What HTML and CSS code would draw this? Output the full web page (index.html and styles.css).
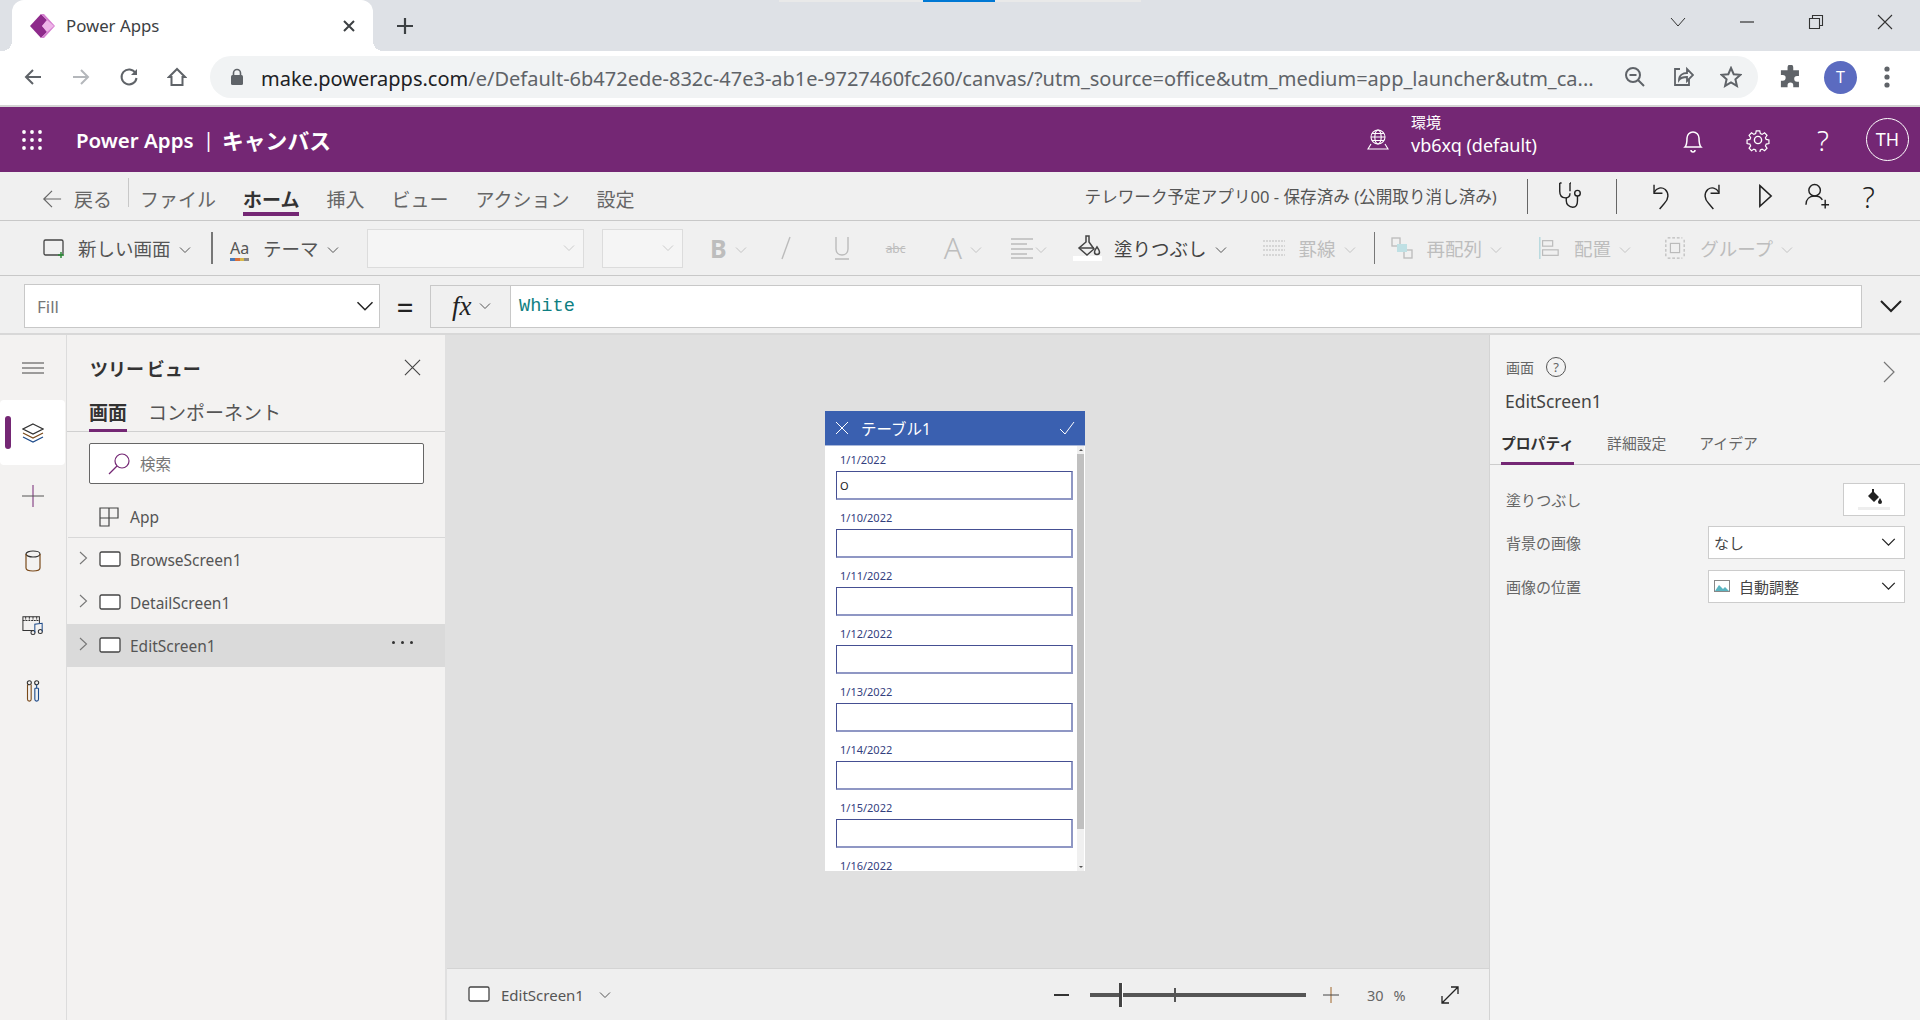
FILE: index.html
```html
<!DOCTYPE html>
<html lang="ja">
<head>
    <meta charset="UTF-8">
    <title>Power Apps</title>
    <link rel="stylesheet" href="styles.css">
</head>
<body>
    <svg class="defs" width="0" height="0">
        <symbol id="chev" viewBox="0 0 12 8"><path d="M1 1.5l5 5 5-5" fill="none" stroke="currentColor" stroke-width="1"/></symbol>
        <symbol id="screen" viewBox="0 0 22 16"><rect x="1" y="1" width="20" height="14" rx="1.5" fill="#fff" stroke="#444" stroke-width="1.3"/></symbol>
        <symbol id="right" viewBox="0 0 9 14"><path d="M1 1l6.5 6L1 13" fill="none" stroke="#777" stroke-width="1.1"/></symbol>
    </svg>

    <!-- Browser tab strip -->
    <div class="tabstrip">
        <div class="loading-line"><span></span></div>
        <div class="tab">
            <svg class="tab-logo" viewBox="0 0 25 24">
                <path d="M11 0L0 12l11 12 6-6V6z" fill="#8e2a8b"/>
                <path d="M11 0l6 6-5 6 5 6-6 6h3l11-12L14 0z" fill="#d67fd0"/>
                <path d="M12 12l5-6 7 6-7 6z" fill="#eeb4e8"/>
            </svg>
            <span class="tab-title">Power Apps</span>
            <svg class="tab-close" viewBox="0 0 14 14"><path d="M2 2l10 10M12 2L2 12" stroke="#3c4043" stroke-width="2"/></svg>
        </div>
        <svg class="tab-new" viewBox="0 0 18 18"><path d="M9 1v16M1 9h16" stroke="#3c4043" stroke-width="2.2"/></svg>
        <div class="win-controls">
            <svg viewBox="0 0 16 10"><path d="M1 1l7 8 7-8" fill="none" stroke="#333" stroke-width="1"/></svg>
            <svg viewBox="0 0 16 10"><path d="M1 5h14" stroke="#333" stroke-width="1.2"/></svg>
            <svg viewBox="0 0 16 16"><path d="M1.5 4.5h10v10h-10zM4.5 4.5v-3h10v10h-3" fill="none" stroke="#333" stroke-width="1.1"/></svg>
            <svg viewBox="0 0 16 16"><path d="M1 1l14 14M15 1L1 15" stroke="#333" stroke-width="1.1"/></svg>
        </div>
    </div>

    <!-- Browser address bar -->
    <div class="addressbar">
        <svg class="nav-icon nav-back" viewBox="0 0 20 20"><path d="M18 10H3M10 3l-7 7 7 7" fill="none" stroke="#5f6368" stroke-width="2"/></svg>
        <svg class="nav-icon nav-fwd" viewBox="0 0 20 20"><path d="M2 10h15M10 3l7 7-7 7" fill="none" stroke="#b4b7bb" stroke-width="2"/></svg>
        <svg class="nav-icon nav-reload" viewBox="0 0 20 20"><path d="M16.5 6A7.5 7.5 0 1 0 17.5 11" fill="none" stroke="#5f6368" stroke-width="2"/><path d="M18 2v6h-6z" fill="#5f6368"/></svg>
        <svg class="nav-icon nav-home" viewBox="0 0 20 20"><path d="M10 2L2 10h2.500v8h11v-8H18z" fill="none" stroke="#5f6368" stroke-width="2"/></svg>
        <div class="urlbar">
            <svg class="lock" viewBox="0 0 14 18"><path d="M3.500 8V5a3.500 3.500 0 0 1 7 0v3" fill="none" stroke="#5f6368" stroke-width="1.600"/><rect x="1" y="7" width="12" height="10" rx="1.500" fill="#5f6368"/></svg>
            <span class="url"><b>make.powerapps.com</b>/e/Default-6b472ede-832c-47e3-ab1e-9727460fc260/canvas/?utm_source=office&amp;utm_medium=app_launcher&amp;utm_ca...</span>
            <svg class="url-icon" viewBox="0 0 22 22"><circle cx="9" cy="9" r="7" fill="none" stroke="#5f6368" stroke-width="2"/><path d="M5.500 9h7M14 14l6 6" stroke="#5f6368" stroke-width="2"/></svg>
            <svg class="url-icon" viewBox="0 0 22 22"><path d="M8 3H3v16h14v-6" fill="none" stroke="#5f6368" stroke-width="1.800"/><path d="M7 14c0-5 4-7 8-7V3l6 6-6 6v-4c-3 0-6 0-8 3z" fill="none" stroke="#5f6368" stroke-width="1.800"/></svg>
            <svg class="url-icon" viewBox="0 0 22 22"><path d="M11 2l2.700 6.200 6.700.6-5 4.500 1.500 6.600L11 16.400l-5.900 3.500 1.500-6.600-5-4.500 6.700-.6z" fill="none" stroke="#5f6368" stroke-width="2"/></svg>
        </div>
        <svg class="ext-icon" viewBox="0 0 24 24"><path d="M9 2a3 3 0 0 1 6 0v3h6v6h-2a3 3 0 0 0 0 6h2v6h-6v-2a3 3 0 0 0-6 0v2H2v-7h2a3 3 0 0 0 0-6H2V5h7z" fill="#5f6368" transform="translate(0 .5) scale(.95)"/></svg>
        <div class="avatar">T</div>
        <svg class="menu-dots" viewBox="0 0 6 24"><circle cx="3" cy="4" r="2.600" fill="#5f6368"/><circle cx="3" cy="12" r="2.600" fill="#5f6368"/><circle cx="3" cy="20" r="2.600" fill="#5f6368"/></svg>
    </div>

    <!-- Power Apps header -->
    <header class="appbar">
        <svg class="waffle" viewBox="0 0 22 22" fill="#fff">
            <circle cx="3" cy="3" r="1.900"/><circle cx="11" cy="3" r="1.900"/><circle cx="19" cy="3" r="1.900"/>
            <circle cx="3" cy="11" r="1.900"/><circle cx="11" cy="11" r="1.900"/><circle cx="19" cy="11" r="1.900"/>
            <circle cx="3" cy="19" r="1.900"/><circle cx="11" cy="19" r="1.900"/><circle cx="19" cy="19" r="1.900"/>
        </svg>
        <span class="brand">Power Apps</span>
        <span class="brand-sep">|</span>
        <span class="brand-sub">キャンバス</span>
        <svg class="globe" viewBox="0 0 22 22" fill="none" stroke="#fff" stroke-width="1.100"><circle cx="11" cy="8" r="7"/><ellipse cx="11" cy="8" rx="3.200" ry="7"/><path d="M4 8h14M5 4.500h12M5 11.500h12M4 15l-3 5h20l-3-5"/></svg>
        <div class="env">
            <span class="env-label">環境</span>
            <span class="env-name">vb6xq (default)</span>
        </div>
        <svg class="bar-icon bell" viewBox="0 0 22 26" fill="none" stroke="#fff" stroke-width="1.500"><path d="M3 20c2-2 2-5 2-9a6 6 0 0 1 12 0c0 4 0 7 2 9zM9 23a2 2 0 0 0 4 0"/></svg>
        <svg class="bar-icon gear" viewBox="0 0 24 24" fill="none" stroke="#fff" stroke-width="1.400"><circle cx="12" cy="12" r="3.600"/><path d="M10 1.500h4l.7 3.200 2 .9 2.800-1.800 2.800 2.800-1.800 2.800.9 2 3.100.6v4l-3.100.7-.9 2 1.800 2.700-2.800 2.800-2.800-1.800-2 .9-.7 3.100h-4l-.7-3.100-2-.9-2.700 1.800-2.800-2.800 1.800-2.700-.9-2-3.200-.7v-4l3.200-.6.900-2-1.800-2.800 2.800-2.800 2.700 1.800 2-.9z" transform="translate(1.500 1.500) scale(.875)"/></svg>
        <span class="bar-help">?</span>
        <div class="user">TH</div>
    </header>

    <!-- Command tabs -->
    <div class="cmdbar">
        <svg class="back-arrow" viewBox="0 0 22 22"><path d="M21 11H2M11 2l-9 9 9 9" fill="none" stroke="#666" stroke-width="1.300"/></svg>
        <span class="cmd-back">戻る</span>
        <div class="cmd-sep"></div>
        <nav class="cmd-tabs">
            <span>ファイル</span>
            <span class="active">ホーム</span>
            <span>挿入</span>
            <span>ビュー</span>
            <span>アクション</span>
            <span>設定</span>
        </nav>
        <span class="app-status">テレワーク予定アプリ00 - 保存済み (公開取り消し済み)</span>
        <div class="tool-sep sep-a"></div>
        <svg class="tool tool-steth" viewBox="0 0 26 30" fill="none" stroke="#222" stroke-width="1.500"><path d="M2 1v9c0 5 3 7 6 7s5-2 5-5M2 1h2M14 1h-1"/><path d="M13 1v9"/><path d="M9 17v3c0 4 3 7 7 7s5-3 5-7v-5"/><circle cx="21" cy="12" r="3"/></svg>
        <div class="tool-sep sep-b"></div>
        <svg class="tool tool-undo" viewBox="0 0 20 30" fill="none" stroke="#222" stroke-width="1.500"><path d="M2 3v9h9"/><path d="M2 11c3-5 8-6 12-3 4 4 4 10-1 15l-5 6"/></svg>
        <svg class="tool tool-redo" viewBox="0 0 20 30" fill="none" stroke="#222" stroke-width="1.500"><path d="M18 3v9H9"/><path d="M18 11c-3-5-8-6-12-3-4 4-4 10 1 15l5 6"/></svg>
        <svg class="tool tool-play" viewBox="0 0 16 26" fill="none" stroke="#222" stroke-width="1.700"><path d="M2 2l12 11L2 24z"/></svg>
        <svg class="tool tool-user" viewBox="0 0 26 28" fill="none" stroke="#222" stroke-width="1.500"><circle cx="10" cy="8" r="6"/><path d="M1 23c0-6 4-9 9-9s7 2 8 4M21 18v9M17 23h8"/></svg>
        <span class="tool-help">?</span>
    </div>

    <!-- Ribbon -->
    <div class="ribbon">
        <div class="rb rb-new">
            <svg class="rb-icon-new" viewBox="0 0 24 20"><rect x="1" y="2" width="19" height="15" rx="1.500" fill="none" stroke="#444" stroke-width="1.300"/><path d="M18 14v6M15 17h6" stroke="#2e8b3a" stroke-width="1.500"/></svg>
            <span>新しい画面</span><svg class="chev"><use href="#chev"/></svg>
        </div>
        <div class="rb-sep"></div>
        <div class="rb rb-theme">
            <span class="aa">Aa<i class="aa-swatch"></i></span>
            <span>テーマ</span><svg class="chev"><use href="#chev"/></svg>
        </div>
        <div class="rb-select rb-font"><svg class="chev"><use href="#chev"/></svg></div>
        <div class="rb-select rb-size"><svg class="chev"><use href="#chev"/></svg></div>
        <div class="rb off rb-bold"><span class="fmt-b">B</span><svg class="chev"><use href="#chev"/></svg></div>
        <div class="rb off rb-italic"><svg viewBox="0 0 12 24" class="fmt-i"><path d="M10 1L2 23" stroke="#bbb" stroke-width="1.400"/></svg></div>
        <div class="rb off rb-under"><svg viewBox="0 0 16 24" class="fmt-u"><path d="M2 1v12c0 8 12 8 12 0V1M1 23h14" fill="none" stroke="#bbb" stroke-width="1.400"/></svg></div>
        <div class="rb off rb-strike"><span class="fmt-s">abc</span></div>
        <div class="rb off rb-color"><span class="fmt-a">A</span><svg class="chev"><use href="#chev"/></svg></div>
        <div class="rb off rb-align">
            <svg viewBox="0 0 22 22" class="fmt-al"><path d="M0 2h22M0 7h16M0 12h22M0 17h16M0 21h22" stroke="#bbb" stroke-width="1.400"/></svg>
            <svg class="chev"><use href="#chev"/></svg>
        </div>
        <div class="rb rb-fill">
            <svg class="fill-icon" viewBox="0 0 29 26"><path d="M13 1h3v6l5 7-7 6-8-7 7-6z" fill="none" stroke="#444" stroke-width="1.500"/><path d="M6 13h15" stroke="#444" stroke-width="1.500"/><path d="M24 12c1.500 2.500 2.500 3.500 2.500 5a2.500 2.500 0 0 1-5 0c0-1.500 1-2.500 2.500-5z" fill="none" stroke="#444" stroke-width="1.500"/><rect y="21" width="29" height="5" fill="#fff"/></svg>
            <span>塗りつぶし</span><svg class="chev"><use href="#chev"/></svg>
        </div>
        <div class="rb off rb-border">
            <svg class="off-icon" viewBox="0 0 22 16"><path d="M0 1h22M0 6h22M0 10h22M0 15h22" stroke="#bbb" stroke-width="1.200" stroke-dasharray="2 1"/></svg>
            <span>罫線</span><svg class="chev"><use href="#chev"/></svg>
        </div>
        <div class="rb-sep rb-sep2"></div>
        <div class="rb off rb-order">
            <svg class="off-icon" viewBox="0 0 22 22" fill="none" stroke="#bbb" stroke-width="1.300"><rect x="1" y="1" width="8" height="8"/><rect x="13" y="13" width="8" height="8"/><rect x="6" y="7" width="10" height="8" fill="#bfe0e4" stroke="none"/></svg>
            <span>再配列</span><svg class="chev"><use href="#chev"/></svg>
        </div>
        <div class="rb off rb-pos">
            <svg class="off-icon" viewBox="0 0 22 24" fill="none" stroke="#bbb" stroke-width="1.300"><path d="M1 0v24" stroke="#a9d3d9"/><rect x="4" y="4" width="11" height="6"/><rect x="4" y="14" width="17" height="6"/></svg>
            <span>配置</span><svg class="chev"><use href="#chev"/></svg>
        </div>
        <div class="rb off rb-group">
            <svg class="off-icon" viewBox="0 0 22 24" fill="none" stroke="#bbb" stroke-width="1.300"><path d="M1 3v18M21 3v18M3 1h16M3 23h16" stroke-dasharray="3 2"/><rect x="6" y="7" width="10" height="10"/></svg>
            <span>グループ</span><svg class="chev"><use href="#chev"/></svg>
        </div>
    </div>

    <!-- Formula bar -->
    <div class="formula">
        <div class="prop-select"><span>Fill</span><svg class="chev chev-lg"><use href="#chev"/></svg></div>
        <span class="equals">=</span>
        <div class="fx"><span class="fx-text">fx</span><svg class="chev"><use href="#chev"/></svg></div>
        <div class="formula-input">White</div>
        <svg class="formula-expand"><use href="#chev"/></svg>
    </div>

    <main class="workspace">
        <!-- Left rail -->
        <aside class="rail">
            <svg class="rail-burger" viewBox="0 0 22 12"><path d="M0 1h22M0 6h22M0 11h22" stroke="#444" stroke-width="1"/></svg>
            <div class="rail-active">
                <svg viewBox="0 0 22 20" fill="none" stroke="#333" stroke-width="1.200"><path d="M11 1l10 5-10 5L1 6z"/><path d="M1 10l10 5 10-5" stroke="#7a4a1a"/><path d="M1 14l10 5 10-5" stroke="#1c4a8a"/></svg>
            </div>
            <svg class="rail-icon" viewBox="0 0 22 22"><path d="M11 0v22" stroke="#742774" stroke-width="1"/><path d="M0 11h22" stroke="#555" stroke-width="1"/></svg>
            <svg class="rail-icon" viewBox="0 0 22 22" fill="none" stroke="#333" stroke-width="1.200"><ellipse cx="11" cy="4" rx="7" ry="3"/><path d="M4 4v14c0 4 14 4 14 0V4" stroke="#7a4a1a"/></svg>
            <svg class="rail-icon" viewBox="0 0 24 22" fill="none" stroke="#333" stroke-width="1.100"><path d="M13 16H1V1h18v7"/><path d="M1 5h18M4 1v4M8 1v4M12 1v4M16 1v4" stroke-dasharray="2 1"/><circle cx="12" cy="18" r="2.200"/><circle cx="20" cy="17" r="2.200"/><path d="M14 18V9l8 -1v9" stroke="#1c4a8a"/></svg>
            <svg class="rail-icon" viewBox="0 0 22 24" fill="none" stroke="#333" stroke-width="1.200"><circle cx="7" cy="3" r="2.200"/><path d="M5 5v16a2 2 0 0 0 4 0V5" stroke="#7a4a1a"/><circle cx="15" cy="3" r="2.200"/><path d="M13 9h4M13 9v12a2 2 0 0 0 4 0V9M15 5v4" stroke="#1c4a8a"/></svg>
        </aside>

        <!-- Tree view -->
        <section class="tree">
            <div class="tree-head">
                <h2>ツリー ビュー</h2>
                <svg class="tree-close" viewBox="0 0 18 18"><path d="M1 1l16 16M17 1L1 17" stroke="#444" stroke-width="1.200"/></svg>
            </div>
            <div class="tree-tabs">
                <span class="active">画面</span>
                <span>コンポーネント</span>
            </div>
            <div class="tree-search">
                <svg viewBox="0 0 22 22" fill="none" stroke="#742774" stroke-width="1.200"><circle cx="14" cy="8" r="7"/><path d="M9 13L1 21"/></svg>
                <span>検索</span>
            </div>
            <div class="tree-app">
                <svg viewBox="0 0 20 20" fill="none" stroke="#444" stroke-width="1.200"><path d="M1 1h18v10H1zM1 11v8h9v-18"/></svg>
                <span>App</span>
            </div>
            <div class="tree-row">
                <svg class="row-chev"><use href="#right"/></svg>
                <svg class="row-screen"><use href="#screen"/></svg>
                <span>BrowseScreen1</span>
            </div>
            <div class="tree-row">
                <svg class="row-chev"><use href="#right"/></svg>
                <svg class="row-screen"><use href="#screen"/></svg>
                <span>DetailScreen1</span>
            </div>
            <div class="tree-row selected">
                <svg class="row-chev"><use href="#right"/></svg>
                <svg class="row-screen"><use href="#screen"/></svg>
                <span>EditScreen1</span>
                <span class="row-more"><i></i><i></i><i></i></span>
            </div>
        </section>

        <!-- Canvas -->
        <section class="canvas">
            <div class="stage">
                <div class="phone">
                    <div class="phone-head">
                        <svg viewBox="0 0 14 14"><path d="M1 1l12 12M13 1L1 13" stroke="#fff" stroke-width="1"/></svg>
                        <span class="phone-title">テーブル1</span>
                        <svg class="phone-check" viewBox="0 0 16 14"><path d="M1 8l5 5L15 1" fill="none" stroke="#fff" stroke-width="1"/></svg>
                    </div>
                    <div class="phone-body">
                        <div class="entry"><label>1/1/2022</label><div class="entry-input">O</div></div>
                        <div class="entry"><label>1/10/2022</label><div class="entry-input"></div></div>
                        <div class="entry"><label>1/11/2022</label><div class="entry-input"></div></div>
                        <div class="entry"><label>1/12/2022</label><div class="entry-input"></div></div>
                        <div class="entry"><label>1/13/2022</label><div class="entry-input"></div></div>
                        <div class="entry"><label>1/14/2022</label><div class="entry-input"></div></div>
                        <div class="entry"><label>1/15/2022</label><div class="entry-input"></div></div>
                        <div class="entry"><label>1/16/2022</label><div class="entry-input"></div></div>
                        <div class="scroll"><i class="scroll-up"></i><i class="scroll-thumb"></i><i class="scroll-down"></i></div>
                    </div>
                </div>
            </div>
            <div class="statusbar">
                <svg class="row-screen"><use href="#screen"/></svg>
                <span class="status-name">EditScreen1</span>
                <svg class="chev status-chev"><use href="#chev"/></svg>
                <span class="zoom-minus"></span>
                <div class="slider"><i class="slider-thumb"></i><i class="slider-tick"></i></div>
                <svg class="zoom-plus" viewBox="0 0 16 16"><path d="M8 0v16" stroke="#a0662a" stroke-width="1"/><path d="M0 8h16" stroke="#444" stroke-width="1"/></svg>
                <span class="zoom-val">30</span>
                <span class="zoom-pct">%</span>
                <svg class="zoom-fit" viewBox="0 0 20 20" fill="none" stroke="#222" stroke-width="1.300"><path d="M2 18L18 2M11 2h7v7M2 11v7h7"/></svg>
            </div>
        </section>

        <!-- Properties -->
        <aside class="props">
            <div class="props-kind">
                <span>画面</span>
                <span class="props-help">?</span>
                <svg class="props-next" viewBox="0 0 12 22"><path d="M1 1l10 10L1 21" fill="none" stroke="#777" stroke-width="1.200"/></svg>
            </div>
            <div class="props-name">EditScreen1</div>
            <div class="props-tabs">
                <span class="active">プロパティ</span>
                <span>詳細設定</span>
                <span>アイデア</span>
            </div>
            <div class="prop-row">
                <span>塗りつぶし</span>
                <div class="fill-btn">
                    <svg viewBox="0 0 16 16"><path d="M6 0h2v3l5 5-5 5-6-6 4-4z" fill="#222"/><path d="M14 9c1 2 2 3 2 4a2 2 0 0 1-4 0c0-1 1-2 2-4z" fill="#222"/></svg>
                    <i></i>
                </div>
            </div>
            <div class="prop-row">
                <span>背景の画像</span>
                <div class="prop-dd"><span>なし</span><svg class="chev chev-lg"><use href="#chev"/></svg></div>
            </div>
            <div class="prop-row">
                <span>画像の位置</span>
                <div class="prop-dd">
                    <svg class="img-icon" viewBox="0 0 16 12"><rect x=".5" y=".5" width="15" height="11" fill="#fff" stroke="#888"/><path d="M1 11l4-6 4 4 2-2 4 4z" fill="#5ab4c0"/></svg>
                    <span class="dd-auto">自動調整</span>
                    <svg class="chev chev-lg"><use href="#chev"/></svg>
                </div>
            </div>
        </aside>
    </main>
</body>
</html>
```

FILE: styles.css
```css
/* Page */
* {
    box-sizing: border-box;
}

body {
    margin: 0;
    width: 1920px;
    height: 1020px;
    overflow: hidden;
    font-family: "Noto Sans", "Noto Sans CJK JP", sans-serif;
    color: #333;
    background-color: #f0f0f0;
}

.defs {
    position: absolute;
}

svg {
    display: block;
    flex: none;
}

.chev {
    width: 12px;
    height: 8px;
    color: #555;
}

.chev-lg {
    width: 18px;
    height: 12px;
    color: #222;
}

/* Browser tab strip */
.tabstrip {
    position: relative;
    display: flex;
    align-items: flex-end;
    height: 51px;
    padding-left: 12px;
    background-color: #dee1e6;
}

.loading-line {
    position: absolute;
    top: 0;
    left: 779px;
    width: 362px;
    height: 2px;
    background-color: #e9e9e9;
}

.loading-line span {
    display: block;
    width: 72px;
    height: 2px;
    margin-left: 144px;
    background-color: #0078d4;
}

.tab {
    position: relative;
    display: flex;
    align-items: center;
    width: 361px;
    height: 51px;
    padding: 0 18px;
    background-color: #fff;
    border-radius: 12px 12px 0 0;
}

.tab::before,
.tab::after {
    content: "";
    position: absolute;
    bottom: 0;
    width: 10px;
    height: 10px;
}

.tab::before {
    left: -10px;
    background: radial-gradient(circle at 0 0, transparent 10px, #fff 10px);
}

.tab::after {
    right: -10px;
    background: radial-gradient(circle at 100% 0, transparent 10px, #fff 10px);
}

.tab-logo {
    width: 25px;
    height: 24px;
}

.tab-title {
    margin-left: 11px;
    font-size: 16.800px;
    color: #3c4043;
}

.tab-close {
    width: 14px;
    height: 14px;
    margin-left: auto;
    margin-right: -1px;
}

.tab-new {
    width: 18px;
    height: 18px;
    margin: 0 0 16px 23px;
}

.win-controls {
    display: flex;
    align-items: center;
    height: 44px;
    margin-left: auto;
    align-self: flex-start;
}

.win-controls svg {
    width: 16px;
    height: 16px;
    margin-right: 53px;
}

.win-controls svg:last-child {
    margin-right: 27px;
}

/* Browser address bar */
.addressbar {
    display: flex;
    align-items: center;
    height: 56px;
    padding-bottom: 2px;
    background-color: #fff;
    border-bottom: 2px solid #d4d4d4;
}

.nav-icon {
    width: 20px;
    height: 20px;
    margin-left: 28px;
}

.nav-back {
    margin-left: 23px;
}

.urlbar {
    display: flex;
    align-items: center;
    width: 1548px;
    height: 42px;
    margin-left: 23px;
    padding: 0 16px 0 20px;
    background-color: #f1f3f4;
    border-radius: 21px;
}

.lock {
    width: 14px;
    height: 18px;
}

.url {
    flex: 1;
    margin-left: 17px;
    padding-top: 2px;
    font-size: 20px;
    white-space: nowrap;
    overflow: hidden;
    color: #5f6368;
}

.url b {
    font-weight: 400;
    color: #202124;
}

.url-icon {
    width: 22px;
    height: 22px;
    margin-left: 26px;
}

.ext-icon {
    width: 24px;
    height: 24px;
    margin-left: 21px;
}

.avatar {
    width: 33px;
    height: 33px;
    margin-left: 21px;
    border-radius: 50%;
    background-color: #5b6bc0;
    color: #fff;
    font-size: 16px;
    line-height: 33px;
    text-align: center;
}

.menu-dots {
    width: 6px;
    height: 24px;
    margin-left: 27px;
}

/* Power Apps header */
.appbar {
    display: flex;
    align-items: center;
    height: 65px;
    padding-left: 21px;
    background-color: #742774;
    color: #fff;
    white-space: nowrap;
}

.waffle {
    width: 22px;
    height: 22px;
}

.brand {
    flex: none;
    width: 116px;
    margin-left: 33px;
    font-size: 20.500px;
    font-weight: 600;
}

.brand-sep {
    flex: none;
    width: 6px;
    margin-left: 11px;
    font-size: 20px;
}

.brand-sub {
    flex: none;
    width: 108px;
    margin-left: 13px;
    font-size: 21.800px;
    font-weight: 700;
}

.globe {
    width: 22px;
    height: 22px;
    margin-left: 1037px;
}

.env {
    display: flex;
    flex: none;
    flex-direction: column;
    width: 125px;
    margin-left: 22px;
    margin-top: -8px;
}

.env-label {
    font-size: 15px;
    line-height: 19px;
}

.env-name {
    font-size: 18px;
    line-height: 26px;
}

.bar-icon {
    width: 22px;
    height: 26px;
}

.bell {
    margin-left: 146px;
}

.gear {
    width: 24px;
    height: 24px;
    margin-left: 42px;
}

.bar-help {
    margin-left: 45px;
    width: 16px;
    font-size: 28px;
    font-weight: 300;
    text-align: center;
}

.user {
    flex: none;
    width: 43px;
    height: 43px;
    margin-left: 35px;
    border: 1px solid #fff;
    border-radius: 50%;
    font-size: 18px;
    line-height: 41px;
    text-align: center;
}

/* Command tabs */
.cmdbar {
    display: flex;
    align-items: center;
    height: 49px;
    padding-left: 42px;
    border-bottom: 1px solid #c8c8c8;
    font-size: 19px;
    color: #666;
}

.cmdbar > span,
.cmd-tabs {
    padding-top: 6px;
}

.back-arrow {
    width: 20px;
    height: 20px;
    margin-top: 6px;
}

.cmd-back {
    margin-left: 12px;
    width: 38px;
    white-space: nowrap;
}

.cmd-sep {
    width: 1px;
    height: 29px;
    margin-left: 16px;
    margin-bottom: 8px;
    background-color: #c8c8c8;
}

.cmd-tabs {
    display: flex;
    gap: 27px;
    margin-left: 11px;
}

.cmd-tabs span {
    position: relative;
    white-space: nowrap;
}

.cmd-tabs .active {
    font-weight: 700;
    color: #333;
}

.cmd-tabs .active::after {
    content: "";
    position: absolute;
    left: 0;
    right: 0;
    bottom: -3px;
    height: 4px;
    background-color: #742774;
}

.cmdbar .app-status {
    flex: none;
    width: 414px;
    margin-left: 450px;
    padding-top: 0;
    font-size: 16.600px;
    white-space: nowrap;
    color: #555;
}

.tool-sep {
    flex: none;
    width: 1px;
    height: 35px;
    background-color: #666;
}

.sep-a {
    margin-left: 28px;
}

.sep-b {
    margin-left: 33px;
}

.tool {
    height: 28px;
}

.tool-steth {
    width: 26px;
    margin-left: 29px;
}

.tool-undo {
    width: 19px;
    margin-left: 35px;
}

.tool-redo {
    width: 19px;
    margin-left: 31px;
}

.tool-play {
    width: 15px;
    margin-left: 37px;
}

.tool-user {
    width: 25px;
    margin-left: 32px;
}

.cmdbar .tool-help {
    width: 18px;
    margin-left: 30px;
    padding-top: 0;
    font-size: 29px;
    font-weight: 300;
    color: #222;
    text-align: center;
}

/* Ribbon */
.ribbon {
    display: flex;
    align-items: center;
    height: 55px;
    padding-left: 43px;
    border-bottom: 1px solid #c8c8c8;
    font-size: 18.500px;
    color: #555;
}

.rb {
    display: flex;
    flex: none;
    align-items: center;
    white-space: nowrap;
}

.rb .chev {
    margin: 3px 0 0 8px;
}

.rb.off {
    color: #bdbdbd;
}

.rb.off .chev {
    color: #c4c4c4;
}

.rb-sep {
    flex: none;
    width: 2px;
    height: 32px;
    background-color: #777;
}

.rb-sep2 {
    width: 1px;
    margin-left: 18px;
}

.rb-new {
    width: 168px;
}

.rb-icon-new {
    width: 24px;
    height: 20px;
    margin-right: 11px;
}

.rb-theme {
    width: 130px;
    margin-left: 17px;
}

.aa {
    position: relative;
    width: 20px;
    margin-right: 13px;
    font-size: 16px;
    line-height: 20px;
}

.aa-swatch {
    position: absolute;
    left: 0;
    bottom: -3px;
    width: 19px;
    height: 3px;
    background: linear-gradient(90deg, #4a7ab8 25%, #d9703a 25% 50%, #d8b84a 50% 75%, #8a8a8a 75%);
}

.rb-select {
    display: flex;
    flex: none;
    align-items: center;
    justify-content: flex-end;
    height: 39px;
    padding-right: 8px;
    background-color: #f5f5f5;
    border: 1px solid #dcdcdc;
}

.rb-select .chev {
    color: #ccc;
}

.rb-font {
    width: 217px;
    margin-left: 7px;
}

.rb-size {
    width: 81px;
    margin-left: 18px;
}

.rb-bold {
    margin-left: 27px;
}

.fmt-b {
    font-size: 25px;
    font-weight: 700;
    line-height: 30px;
}

.rb-italic {
    margin-left: 33px;
}

.fmt-i {
    width: 12px;
    height: 24px;
}

.rb-under {
    margin-left: 42px;
}

.fmt-u {
    width: 16px;
    height: 24px;
}

.rb-strike {
    margin-left: 36px;
}

.fmt-s {
    width: 22px;
    font-size: 12px;
    text-decoration: line-through;
}

.rb-color {
    margin-left: 36px;
}

.fmt-a {
    font-size: 30px;
    font-weight: 300;
    line-height: 32px;
}

.rb-align {
    margin-left: 29px;
}

.fmt-al {
    width: 22px;
    height: 22px;
}

.rb-align .chev {
    margin-left: 2px;
}

.rb-fill {
    margin-left: 26px;
    color: #444;
}

.fill-icon {
    width: 29px;
    height: 26px;
    margin-right: 12px;
}

.rb-border {
    margin-left: 36px;
}

.off-icon {
    width: 22px;
    height: 22px;
    margin-right: 14px;
}

.rb-order {
    margin-left: 16px;
}

.rb-pos {
    margin-left: 36px;
}

.rb-group {
    margin-left: 33px;
}

/* Formula bar */
.formula {
    display: flex;
    align-items: center;
    height: 59px;
    padding: 3px 0 0 24px;
    border-bottom: 2px solid #d8d8d8;
    background-color: #f0f0f0;
}

.prop-select {
    display: flex;
    align-items: center;
    justify-content: space-between;
    width: 356px;
    height: 44px;
    padding: 0 5px 0 12px;
    background-color: #fff;
    border: 1px solid #c8c8c8;
    font-size: 17px;
    color: #777;
}

.equals {
    width: 50px;
    padding-top: 3px;
    font-size: 30px;
    line-height: 44px;
    text-align: center;
    color: #222;
}

.fx {
    display: flex;
    align-items: center;
    width: 81px;
    height: 43px;
    padding-left: 21px;
    border: 1px solid #c8c8c8;
    background-color: #f0f0f0;
}

.fx-text {
    width: 27px;
    font-family: "Liberation Serif", serif;
    font-size: 27px;
    font-style: italic;
    color: #222;
}

.formula-input {
    width: 1351px;
    height: 43px;
    padding-left: 8px;
    background-color: #fff;
    border: 1px solid #c8c8c8;
    border-left: none;
    font-family: "Liberation Mono", monospace;
    font-size: 18.600px;
    line-height: 41px;
    color: #0f7f82;
}

.formula-expand {
    width: 26px;
    height: 16px;
    margin-left: 16px;
    color: #222;
}

/* Main area */
.workspace {
    display: grid;
    grid-template-columns: 67px 378px 1044px 431px;
    height: 685px;
}

/* Left rail */
.rail {
    display: flex;
    flex-direction: column;
    align-items: center;
    padding-right: 1px;
    background-color: #f3f2f1;
    border-right: 1px solid #dcdcdc;
}

.rail-burger {
    width: 22px;
    height: 12px;
    margin-top: 27px;
}

.rail-active {
    position: relative;
    display: flex;
    align-items: center;
    justify-content: center;
    width: 65px;
    height: 65px;
    margin-top: 26px;
    background-color: #fff;
    border-radius: 4px;
}

.rail-active::before {
    content: "";
    position: absolute;
    left: 5px;
    top: 16px;
    width: 6px;
    height: 33px;
    border-radius: 3px;
    background-color: #742774;
}

.rail-active svg {
    width: 22px;
    height: 20px;
}

.rail-icon {
    width: 22px;
    height: 22px;
    margin-top: 43px;
}

.rail-active + .rail-icon {
    margin-top: 20px;
}

/* Tree view */
.tree {
    background-color: #f3f2f1;
}

.tree-head {
    display: flex;
    align-items: center;
    justify-content: space-between;
    height: 65px;
    padding: 0 24px 0 23px;
}

.tree-head h2 {
    margin: 0;
    font-size: 18px;
    font-weight: 700;
    word-spacing: -2px;
    color: #333;
}

.tree-close {
    width: 17px;
    height: 17px;
}

.tree-tabs {
    display: flex;
    gap: 21px;
    height: 32px;
    padding-left: 22px;
    border-bottom: 1px solid #d0d0d0;
    font-size: 19px;
    line-height: 26px;
    color: #555;
}

.tree-tabs .active {
    height: 32px;
    border-bottom: 3px solid #742774;
    font-weight: 700;
    color: #333;
}

.tree-search {
    display: flex;
    align-items: center;
    width: 335px;
    height: 41px;
    margin: 11px 0 0 22px;
    padding-left: 18px;
    background-color: #fff;
    border: 1px solid #666;
    border-radius: 2px;
    font-size: 15.500px;
    color: #777;
}

.tree-search svg {
    width: 22px;
    height: 22px;
    margin-right: 10px;
}

.tree-app {
    display: flex;
    align-items: center;
    height: 54px;
    margin-left: 1px;
    padding: 12px 0 0 31px;
    border-bottom: 1px solid #d8d8d8;
    font-size: 15.500px;
    color: #555;
}

.tree-app svg {
    width: 20px;
    height: 20px;
    margin-right: 11px;
}

.tree-row {
    display: flex;
    align-items: center;
    height: 43px;
    padding-left: 12px;
    font-size: 15.500px;
    color: #555;
}

.tree-row.selected {
    background-color: #dadada;
}

.row-chev {
    width: 9px;
    height: 14px;
    margin-top: -3px;
}

.row-screen {
    width: 22px;
    height: 16px;
    margin-left: 11px;
    margin-top: -1px;
}

.tree-row span:first-of-type {
    margin-left: 9px;
}

.row-more {
    display: flex;
    gap: 6px;
    margin-left: auto;
    margin-right: 32px;
    margin-bottom: 6px;
}

.row-more i {
    width: 3px;
    height: 3px;
    border-radius: 50%;
    background-color: #333;
}

/* Canvas */
.canvas {
    display: flex;
    flex-direction: column;
    background-color: #e0e0e0;
}

.stage {
    flex: 1;
    padding: 76px 0 0 380px;
}

.phone {
    width: 260px;
    height: 460px;
    background-color: #fff;
    overflow: hidden;
}

.phone-head {
    display: flex;
    align-items: center;
    height: 35px;
    padding: 0 10px;
    background-color: #3a60b0;
    border-bottom: 1px solid #a9b8da;
    color: #fff;
}

.phone-head svg {
    width: 14px;
    height: 14px;
}

.phone-title {
    margin-left: 12px;
    font-size: 15.500px;
}

.phone-head .phone-check {
    width: 16px;
    height: 14px;
    margin-left: auto;
}

.phone-body {
    position: relative;
    height: 425px;
    overflow: hidden;
}

.entry {
    height: 58px;
    padding: 5px 0 0 11px;
}

.entry label {
    display: block;
    height: 20px;
    padding-left: 4px;
    font-size: 11px;
    line-height: 18px;
    color: #33407e;
}

.entry-input {
    width: 237px;
    height: 29px;
    padding-left: 3px;
    border: 1px solid #5560a0;
    border-width: 1px 2px 2px 1px;
    border-color: #454f92 #8f97c4 #8f97c4 #454f92;
    font-size: 11px;
    line-height: 27px;
    color: #222;
}

.scroll {
    position: absolute;
    top: 0;
    right: 1px;
    display: flex;
    flex-direction: column;
    width: 7px;
    height: 100%;
    background-color: #f0f0f0;
}

.scroll-thumb {
    width: 7px;
    height: 375px;
    margin-top: 8px;
    background-color: #c0c0c0;
}

.scroll-up,
.scroll-down {
    position: absolute;
    left: 2px;
    width: 0;
    height: 0;
    border-left: 2px solid transparent;
    border-right: 2px solid transparent;
}

.scroll-up {
    top: 3px;
    border-bottom: 2px solid #555;
}

.scroll-down {
    bottom: 3px;
    border-top: 2px solid #555;
}

/* Canvas status bar */
.statusbar {
    display: flex;
    align-items: center;
    height: 52px;
    padding-left: 21px;
    margin-left: 2px;
    background-color: #efefef;
    border-top: 1px solid #d4d4d4;
    font-size: 15px;
    color: #555;
}

.statusbar .row-screen {
    margin-left: 0;
}

.status-name {
    flex: none;
    margin-left: 11px;
    width: 84px;
    white-space: nowrap;
}

.status-chev {
    margin-left: 13px;
    width: 14px;
}

.zoom-minus {
    flex: none;
    width: 15px;
    height: 2px;
    margin-left: 442px;
    background-color: #333;
}

.slider {
    position: relative;
    flex: none;
    width: 216px;
    height: 4px;
    margin-left: 21px;
    background-color: #555;
}

.slider-thumb {
    position: absolute;
    left: 29px;
    top: -10px;
    width: 3px;
    height: 24px;
    background-color: #444;
    border: solid #fff;
    border-width: 0 1px 0 0;
    box-sizing: content-box;
}

.slider-tick {
    position: absolute;
    left: 84px;
    top: -5px;
    width: 2px;
    height: 14px;
    background-color: #555;
}

.zoom-plus {
    width: 16px;
    height: 16px;
    margin-left: 17px;
}

.zoom-val {
    margin-left: 28px;
    font-size: 14.500px;
    color: #666;
}

.zoom-pct {
    margin-left: 10px;
    font-size: 14.500px;
    color: #666;
}

.zoom-fit {
    width: 20px;
    height: 20px;
    margin-left: 34px;
}

/* Properties */
.props {
    padding-top: 20px;
    background-color: #f3f3f3;
    border-left: 1px solid #d4d4d4;
}

.props-kind {
    display: flex;
    align-items: center;
    height: 24px;
    padding-left: 16px;
    font-size: 14px;
    color: #666;
}

.props-help {
    width: 20px;
    height: 20px;
    margin-left: 12px;
    border: 1px solid #555;
    border-radius: 50%;
    font-size: 13px;
    line-height: 18px;
    text-align: center;
}

.props-next {
    width: 12px;
    height: 22px;
    margin: 10px 0 0 auto;
    margin-right: 25px;
}

.props-name {
    height: 36px;
    margin-top: 4px;
    padding-left: 15px;
    font-size: 17.500px;
    line-height: 36px;
    color: #444;
}

.props-tabs {
    display: flex;
    gap: 33px;
    height: 46px;
    padding: 11px 0 0 11px;
    border-bottom: 1px solid #ccc;
    font-size: 14.800px;
    color: #666;
}

.props-tabs span {
    height: 35px;
    line-height: 27px;
}

.props-tabs .active {
    border-bottom: 3px solid #742774;
    font-weight: 700;
    color: #333;
}

.prop-row {
    display: flex;
    align-items: center;
    justify-content: space-between;
    height: 44px;
    padding: 0 15px 0 16px;
    font-size: 15px;
    color: #666;
}

.prop-row:nth-of-type(4) {
    margin-top: 14px;
    height: 41px;
}

.fill-btn {
    position: relative;
    display: flex;
    justify-content: center;
    width: 62px;
    height: 33px;
    padding-top: 5px;
    background-color: #fff;
    border: 1px solid #ccc;
}

.fill-btn svg {
    width: 16px;
    height: 16px;
}

.fill-btn i {
    position: absolute;
    left: 14px;
    bottom: 5px;
    width: 32px;
    height: 3px;
    background-color: #eee;
}

.prop-dd {
    display: flex;
    align-items: center;
    width: 197px;
    height: 33px;
    padding: 0 5px;
    background-color: #fff;
    border: 1px solid #ccc;
    color: #444;
}

.prop-dd .chev-lg {
    margin-left: auto;
    margin-right: 3px;
    width: 15px;
}

.img-icon {
    width: 16px;
    height: 12px;
    margin-right: 9px;
}
```
